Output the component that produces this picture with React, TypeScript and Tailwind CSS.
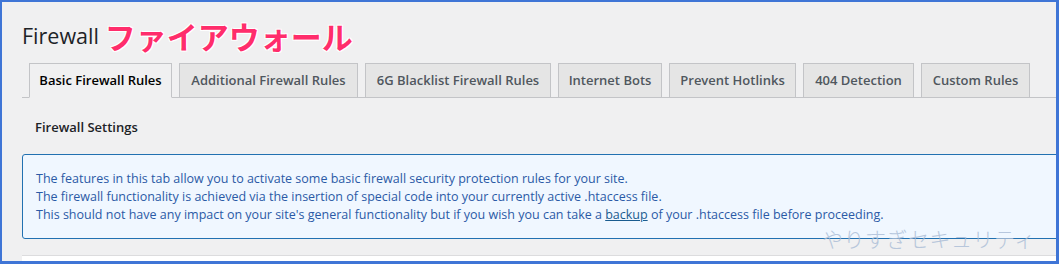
import React from "react";

const tabs = [
  { label: "Basic Firewall Rules", w: "w-[143px]", active: true },
  { label: "Additional Firewall Rules", w: "w-[179px]" },
  { label: "6G Blacklist Firewall Rules", w: "w-[186px]" },
  { label: "Internet Bots", w: "w-[104px]" },
  { label: "Prevent Hotlinks", w: "w-[127px]" },
  { label: "404 Detection", w: "w-[111px]" },
  { label: "Custom Rules", w: "w-[109px]" },
];

export default function App() {
  return (
    <div
      className="relative w-[1059px] h-[264px] overflow-hidden bg-[#f0f0f1]"
      style={{ fontFamily: '"Segoe UI", "Open Sans", "Noto Sans", sans-serif' }}
    >
      <div className="w-[1200px] pl-[22px] pt-[17px]">
        <div className="flex items-center h-[38px]">
          <h1 className="text-[21.5px] leading-[30px] text-[#1d2327] font-normal">Firewall</h1>
          <span
            className="ml-[6px] text-[31px] leading-[38px] font-bold text-[#ff2d6b]"
            style={{
              fontFamily: '"Noto Sans CJK JP", sans-serif',
              textShadow:
                "0 0 2px #fff, 1px 1px 0 #fff, -1px -1px 0 #fff, 1px -1px 0 #fff, -1px 1px 0 #fff",
            }}
          >
            ファイアウォール
          </span>
        </div>
        <div className="mt-[8px] flex items-end gap-[7px] pl-[7px] border-b border-[#c3c4c7] h-[35px] w-[1100px]">
          {tabs.map((t) => (
            <div
              key={t.label}
              className={`${t.w} h-[35px] -mb-px flex items-center justify-center border border-[#c3c4c7] text-[13px] font-semibold whitespace-nowrap ${
                t.active
                  ? "bg-[#f0f0f1] border-b-[#f0f0f1] text-[#000]"
                  : "bg-[#e5e5e5] text-[#50575e]"
              }`}
            >
              {t.label}
            </div>
          ))}
        </div>
        <div className="pl-[13px] pt-[20px] h-[56px] text-[13px] font-semibold text-[#1d2327]">
          Firewall Settings
        </div>
        <div className="w-[1100px] h-[85px] rounded-[3px] border border-[#2271b1] bg-[#f0f7ff] pl-[13px] pt-[15px] text-[12.5px] leading-[18px] text-[#2b5aa6]">
          <p>The features in this tab allow you to activate some basic firewall security protection rules for your site.</p>
          <p>The firewall functionality is achieved via the insertion of special code into your currently active .htaccess file.</p>
          <p>
            This should not have any impact on your site's general functionality but if you wish you can take a{" "}
            <span className="underline text-[#1a5c8f]">backup</span> of your .htaccess file before proceeding.
          </p>
        </div>
        <div className="mt-[16px] w-[1100px] h-[20px] bg-white border-t border-[#dcdcde]" />
      </div>
      <span
        className="absolute left-[822px] top-[225px] text-[21px] leading-[26px] text-[#a9bcd6] opacity-80 tracking-[0.5px]"
        style={{ fontFamily: '"Noto Sans CJK JP", sans-serif', fontWeight: 300 }}
      >
        やりすぎセキュリティ
      </span>
      <div className="pointer-events-none absolute inset-0 border-2 border-r-[3px] border-b-[3px] border-[#3f75d6]" />
    </div>
  );
}
